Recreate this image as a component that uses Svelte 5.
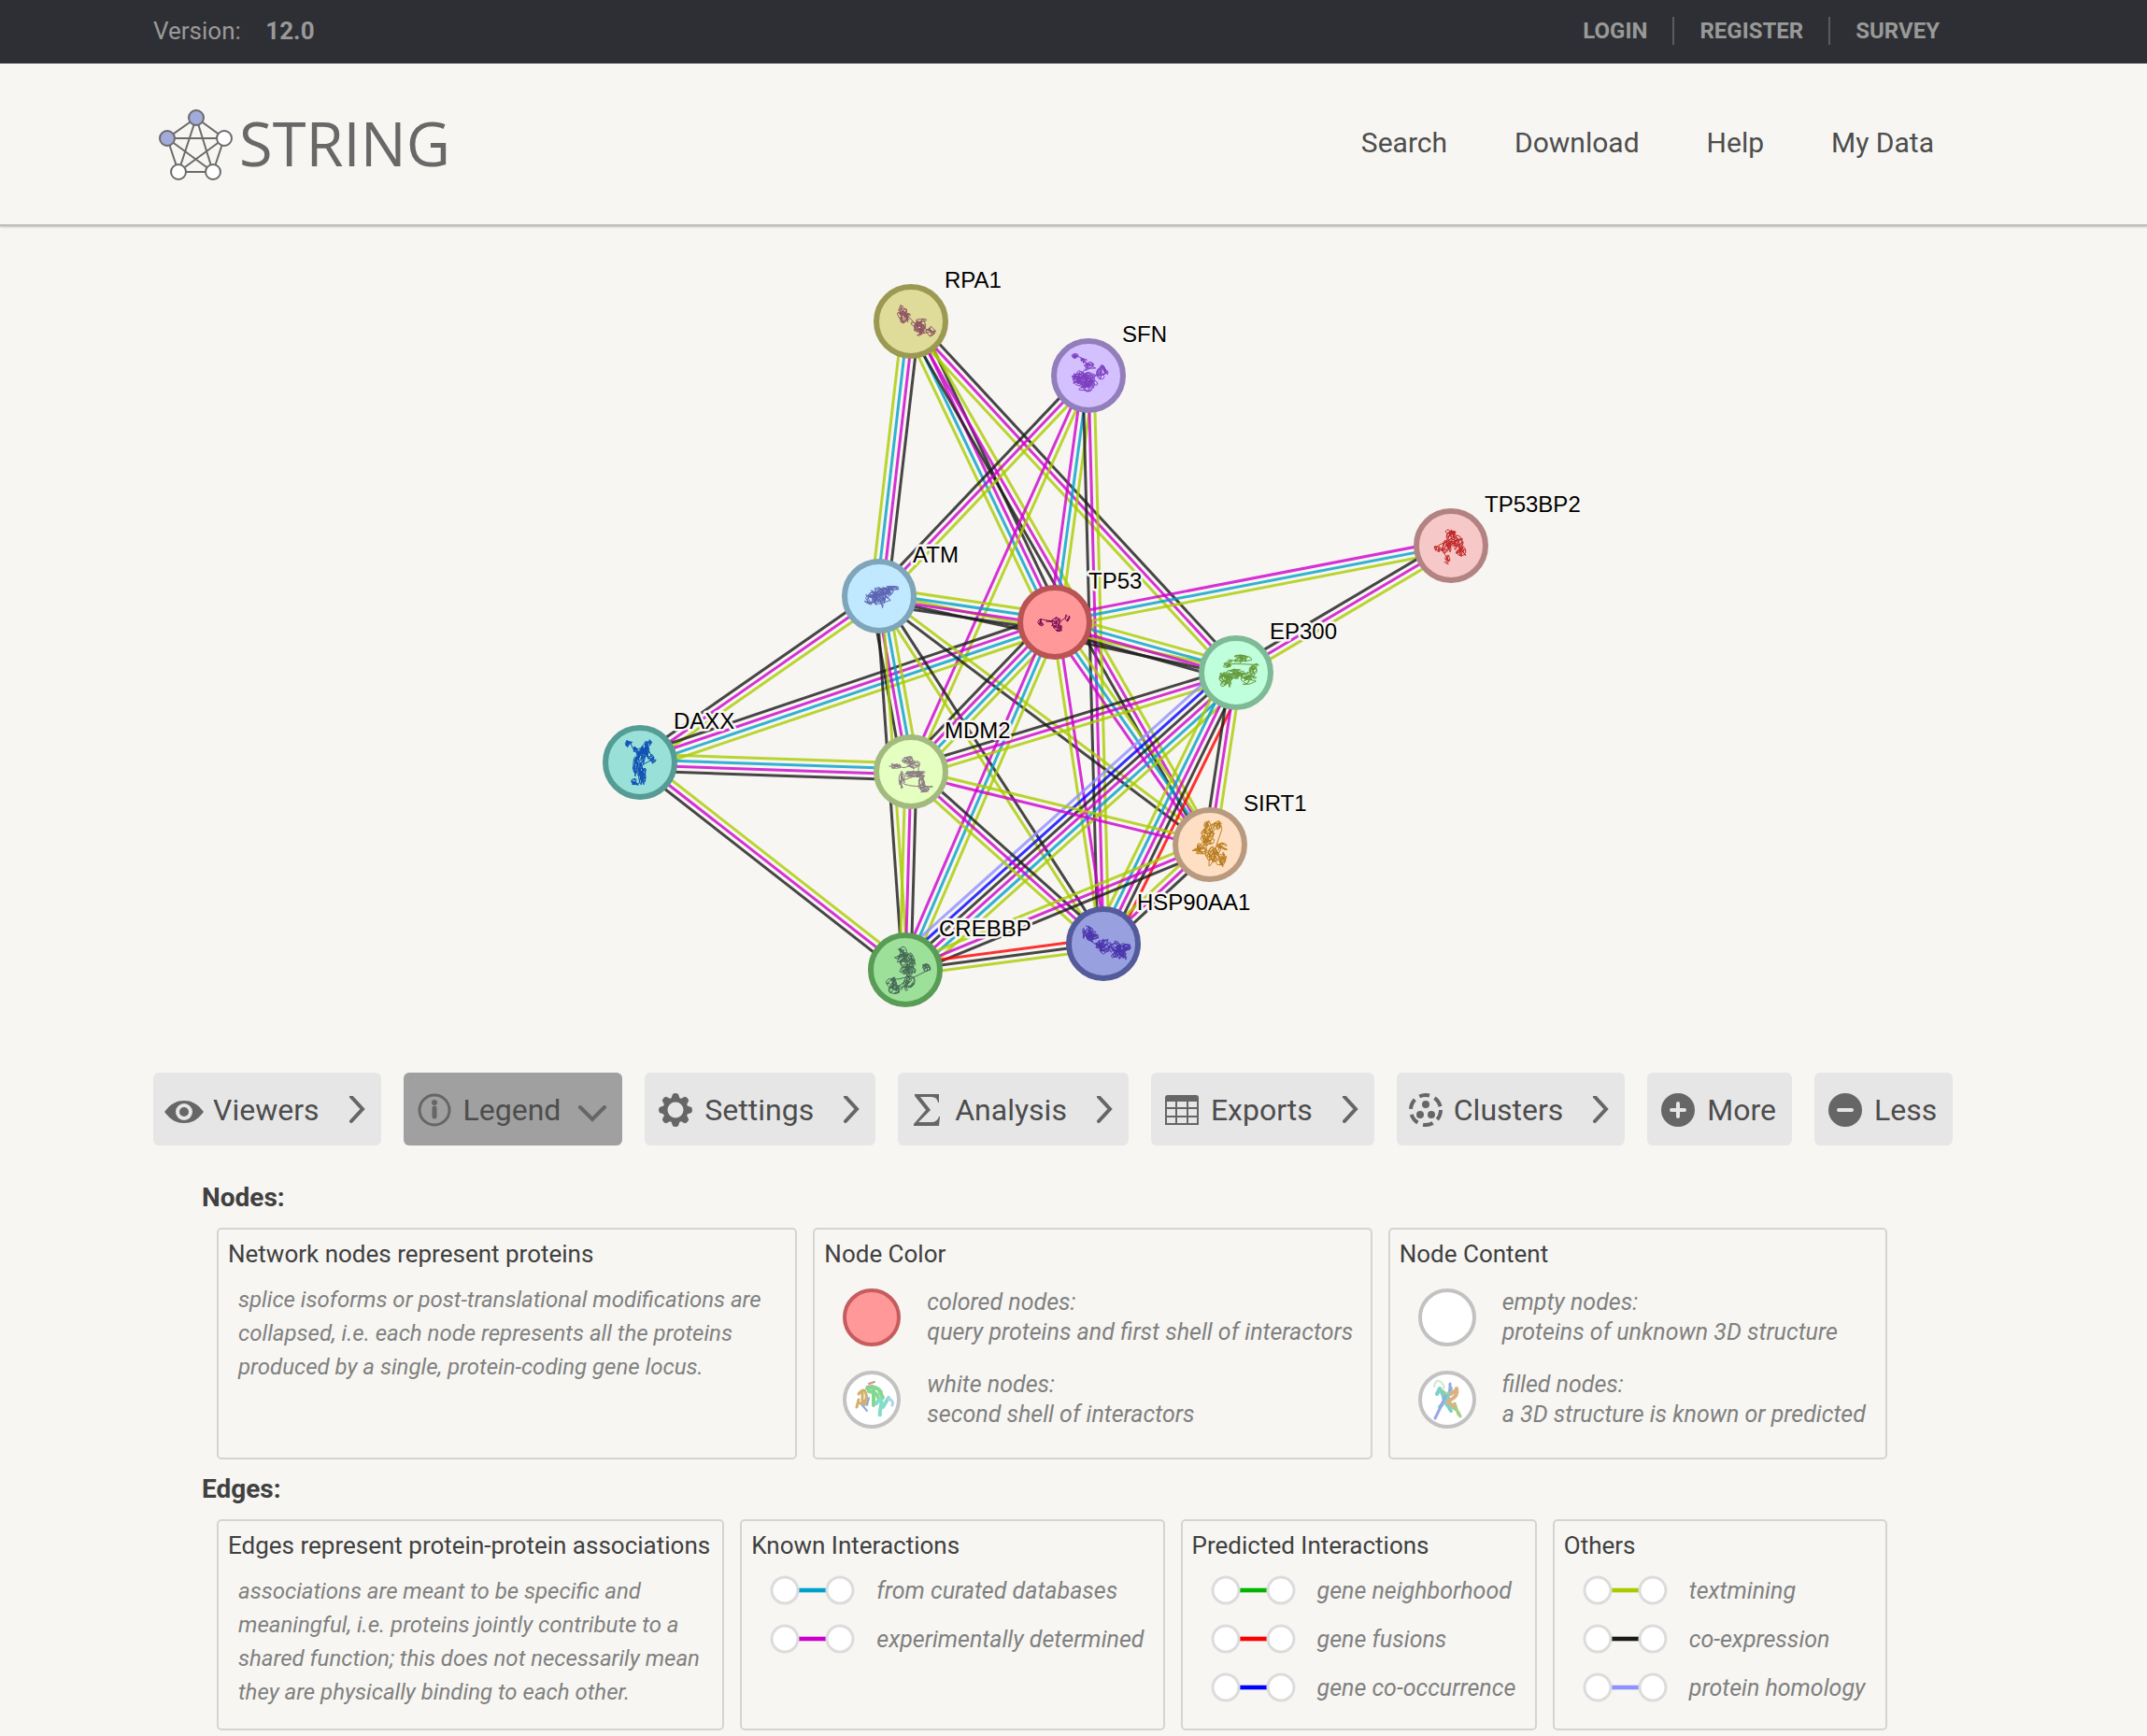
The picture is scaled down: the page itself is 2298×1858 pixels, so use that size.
<script lang="ts">
    type Blob = [number, number, number, number];
    type ProteinNode = { name: string; x: number; y: number; fill: string; ring: string; ink: string; blobs: Blob[] };

    // one letter for each kind of evidence
    const evidence: Record<string, string> = {
        t: '#a9cc00',
        e: '#cc00cc',
        d: '#00a0c8',
        c: '#1a1a1a',
        f: '#ff0000',
        o: '#0000ff',
        h: '#9090ff',
        n: '#00b400'
    };

    const nodes: ProteinNode[] = [
        { name: 'RPA1', x: 975, y: 344, fill: '#dfdc99', ring: '#9c9953', ink: '#8f5563', blobs: [[-9, -11, 6, 8], [-9, -4, 11, 9], [9, 4, 11, 10], [10, 9, 8, 8], [21, 10, 7, 7]] },
        { name: 'SFN', x: 1165, y: 402, fill: '#d4c0ff', ring: '#917eba', ink: '#7c3fc0', blobs: [[-14, -20, 6, 5], [-7, -15, 6, 5], [1, -9, 7, 7], [-4, 3, 17, 13], [0, 10, 12, 10], [14, -4, 8, 11]] },
        { name: 'ATM', x: 941, y: 638, fill: '#c0e8ff', ring: '#7ea5ba', ink: '#5d66b4', blobs: [[-7, 3, 13, 9], [0, 1, 14, 13], [7, -5, 11, 8], [14, -8, 9, 4]] },
        { name: 'TP53', x: 1129, y: 666, fill: '#ff9999', ring: '#ba5454', ink: '#7c1257', blobs: [[-16, 0, 5, 6], [-5, -1, 8, 1], [2, 1, 8, 8], [4, 7, 6, 6], [13, -4, 4, 6]] },
        { name: 'TP53BP2', x: 1553, y: 584, fill: '#f7c8c8', ring: '#b38383', ink: '#c02727', blobs: [[0, -12, 9, 8], [6, -4, 9, 10], [10, 7, 8, 8], [-5, 1, 7, 11], [-15, 3, 4, 6], [-3, 15, 5, 6]] },
        { name: 'EP300', x: 1323, y: 720, fill: '#c0ffdb', ring: '#7eba96', ink: '#659a3a', blobs: [[6, -14, 14, 6], [-9, -9, 7, 7], [18, -5, 7, 9], [-12, 7, 13, 10], [0, 1, 14, 7], [12, 6, 11, 9]] },
        { name: 'DAXX', x: 685, y: 816, fill: '#99e0d8', ring: '#549c94', ink: '#1050b4', blobs: [[-12, -20, 6, 5], [-4, -14, 6, 5], [1, -9, 6, 14], [6, -12, 6, 12], [10, -22, 5, 6], [13, -3, 6, 6], [-4, 4, 5, 16], [2, 14, 6, 16], [-6, 21, 7, 5]] },
        { name: 'MDM2', x: 975, y: 826, fill: '#e4ffc0', ring: '#a2ba7e', ink: '#8c7b84', blobs: [[-15, -6, 9, 4], [-2, -12, 9, 7], [3, -8, 8, 6], [3, 2, 16, 5], [-10, 8, 5, 12], [12, 8, 5, 9], [16, 17, 10, 7]] },
        { name: 'CREBBP', x: 969, y: 1038, fill: '#9de09a', ring: '#599c55', ink: '#476a56', blobs: [[-4, -20, 6, 7], [-4, -13, 10, 7], [3, -8, 10, 12], [3, 2, 10, 10], [3, 14, 9, 11], [-14, 13, 9, 8], [-11, 20, 10, 7], [21, -3, 8, 6]] },
        { name: 'SIRT1', x: 1295, y: 904, fill: '#ffdfc4', ring: '#ba9a7f', ink: '#b97d1c', blobs: [[-4, -22, 5, 7], [-2, -13, 10, 8], [-4, -4, 10, 10], [-10, 4, 11, 8], [8, -20, 8, 7], [3, 12, 10, 12], [13, 16, 8, 11], [14, 3, 10, 6]] },
        { name: 'HSP90AA1', x: 1181, y: 1010, fill: '#99a0e0', ring: '#545b9c', ink: '#4a35ac', blobs: [[-16, -11, 8, 10], [-12, -9, 10, 9], [-4, 1, 7, 10], [3, 3, 10, 9], [13, 6, 9, 11], [21, 10, 9, 12], [25, 4, 7, 7]] }
    ];

    // from, to, strands: the first strand lies on the left of the direction of travel
    const edges: [string, string, string][] = [
        ['ATM', 'RPA1', 'tdec'],
        ['RPA1', 'TP53', 'cedt'],
        ['RPA1', 'SIRT1', 'tec'],
        ['RPA1', 'EP300', 'cet'],
        ['ATM', 'SFN', 'cet'],
        ['MDM2', 'SFN', 'et'],
        ['TP53', 'SFN', 'edt'],
        ['HSP90AA1', 'SFN', 'cet'],
        ['ATM', 'EP300', 'tc'],
        ['ATM', 'TP53', 'tdec'],
        ['TP53', 'EP300', 'tdec'],
        ['DAXX', 'ATM', 'cet'],
        ['DAXX', 'TP53', 'cedt'],
        ['DAXX', 'MDM2', 'tdec'],
        ['DAXX', 'CREBBP', 'tec'],
        ['MDM2', 'ATM', 'cedt'],
        ['CREBBP', 'ATM', 'ct'],
        ['CREBBP', 'MDM2', 'tec'],
        ['ATM', 'HSP90AA1', 'ct'],
        ['ATM', 'SIRT1', 'tc'],
        ['MDM2', 'TP53', 'cedt'],
        ['CREBBP', 'TP53', 'edt'],
        ['HSP90AA1', 'TP53', 'te'],
        ['TP53', 'SIRT1', 'tde'],
        ['TP53', 'TP53BP2', 'edt'],
        ['EP300', 'TP53BP2', 'cet'],
        ['MDM2', 'EP300', 'cet'],
        ['CREBBP', 'EP300', 'hocedt'],
        ['HSP90AA1', 'EP300', 'tdecf'],
        ['SIRT1', 'EP300', 'cet'],
        ['MDM2', 'SIRT1', 'te'],
        ['MDM2', 'HSP90AA1', 'cet'],
        ['CREBBP', 'SIRT1', 'tec'],
        ['HSP90AA1', 'SIRT1', 'tec'],
        ['CREBBP', 'HSP90AA1', 'fct']
    ];

    const strands = edges.flatMap(([from, to, kinds]) => {
        const a = nodes.find((n) => n.name === from)!;
        const b = nodes.find((n) => n.name === to)!;
        const len = Math.hypot(b.x - a.x, b.y - a.y);
        const nx = -(b.y - a.y) / len;
        const ny = (b.x - a.x) / len;
        return kinds.split('').map((kind, i) => {
            const off = (i - (kinds.length - 1) / 2) * 6;
            return { x1: a.x + nx * off, y1: a.y + ny * off, x2: b.x + nx * off, y2: b.y + ny * off, color: evidence[kind] };
        });
    });

    // folded chain that wanders through each blob in turn
    function fold(blobs: Blob[], seed: number) {
        let s = seed * 7919 + 13;
        const rnd = () => {
            s = (s * 16807) % 2147483647;
            return s / 2147483647;
        };
        const points: [number, number][] = [];
        for (const [x, y, rx, ry] of blobs) {
            const count = Math.round((rx * ry) / 4) + 10;
            for (let i = 0; i < count; i++) {
                const a = rnd() * Math.PI * 2;
                const r = Math.sqrt(rnd());
                points.push([x + Math.cos(a) * rx * r, y + Math.sin(a) * ry * r]);
            }
        }
        let d = `M${points[0][0].toFixed(1)} ${points[0][1].toFixed(1)}`;
        for (let i = 1; i < points.length - 1; i++) {
            const [x, y] = points[i];
            const [x2, y2] = points[i + 1];
            d += `Q${x.toFixed(1)} ${y.toFixed(1)} ${((x + x2) / 2).toFixed(1)} ${((y + y2) / 2).toFixed(1)}`;
        }
        return d;
    }

    const account = ['Login', 'Register', 'Survey'];
    const menu = ['Search', 'Download', 'Help', 'My Data'];
    const tools = [
        { label: 'Viewers', arrow: true },
        { label: 'Legend', arrow: true, open: true },
        { label: 'Settings', arrow: true },
        { label: 'Analysis', arrow: true, narrow: true },
        { label: 'Exports', arrow: true },
        { label: 'Clusters', arrow: true, narrow: true },
        { label: 'More', arrow: false },
        { label: 'Less', arrow: false }
    ];

    const nodeBoxes = [
        { title: 'Node Color', items: [
            { kind: 'red', name: 'colored nodes:', text: 'query proteins and first shell of interactors' },
            { kind: 'globule', name: 'white nodes:', text: 'second shell of interactors' }
        ] },
        { title: 'Node Content', items: [
            { kind: 'empty', name: 'empty nodes:', text: 'proteins of unknown 3D structure' },
            { kind: 'cross', name: 'filled nodes:', text: 'a 3D structure is known or predicted' }
        ] }
    ];

    const edgeBoxes = [
        { title: 'Known Interactions', items: [['d', 'from curated databases'], ['e', 'experimentally determined']] },
        { title: 'Predicted Interactions', items: [['n', 'gene neighborhood'], ['f', 'gene fusions'], ['o', 'gene co-occurrence']] },
        { title: 'Others', items: [['t', 'textmining'], ['c', 'co-expression'], ['h', 'protein homology']] }
    ];
</script>

<div class="topbar">
    <p class="version">Version: <strong>12.0</strong></p>
    <nav class="account" aria-label="Account">
        {#each account as item}
            <a href="#{item}">{item}</a>
        {/each}
    </nav>
</div>

<header class="masthead">
    <a class="logo" href="#home">
        <svg width="82" height="84" viewBox="170 109 82 84" aria-hidden="true">
            <path d="M210 124L179 146L191 182H228L240 146ZM210 124L191 182M210 124L228 182M179 146H240M179 146L228 182M240 146L191 182" fill="none" stroke="#6b6b6b" stroke-width="2" />
            <g stroke="#6b6b6b" stroke-width="2">
                <circle cx="210" cy="124" r="8" fill="#a3abdb" />
                <circle cx="179" cy="146" r="8" fill="#a3abdb" />
                <circle cx="240" cy="146" r="8" fill="#fff" />
                <circle cx="191" cy="182" r="8" fill="#fff" />
                <circle cx="228" cy="182" r="8" fill="#fff" />
            </g>
        </svg>
        <span>STRING</span>
    </a>
    <nav class="menu" aria-label="Main">
        {#each menu as item}
            <a href="#{item}">{item}</a>
        {/each}
    </nav>
</header>

<main>
    <svg class="network" viewBox="589 242 1120 906" role="img" aria-label="Protein network">
        <g class="strands">
            {#each strands as s}
                <line x1={s.x1} y1={s.y1} x2={s.x2} y2={s.y2} stroke={s.color} />
            {/each}
        </g>
        {#each nodes as n, i}
            <g transform="translate({n.x} {n.y})">
                <circle r="37" fill={n.fill} stroke={n.ring} stroke-width="6" />
                <path d={fold(n.blobs, i + 1)} fill="none" stroke={n.ink} stroke-width="1" />
            </g>
        {/each}
        {#each nodes as n}
            <text x={n.x + 36} y={n.y - 36}>{n.name}</text>
        {/each}
    </svg>

    <div class="tools">
        {#each tools as tool}
            <button type="button" class:open={tool.open} aria-expanded={tool.open ? 'true' : 'false'}>
                <svg class="icon" class:narrow={tool.narrow} viewBox="-21 -20 42 40" aria-hidden="true">
                    {#if tool.label === 'Viewers'}
                        <path d="M-21 2C-14 -7 -8 -10 0 -10S14 -7 21 2C14 11 8 14 0 14S-14 11 -21 2Z" />
                        <circle cy="2" r="9" class="hole" />
                        <circle cy="2" r="5" />
                    {:else if tool.label === 'Legend'}
                        <circle r="16" class="line" />
                        <circle cy="-8" r="3" />
                        <path d="M0 -2V7" class="line thick" />
                    {:else if tool.label === 'Settings'}
                        {#each [0, 45, 90, 135, 180, 225, 270, 315] as turn}
                            <path d="M-5 -11L-3 -17Q0 -19 3 -17L5 -11Z" transform="rotate({turn})" />
                        {/each}
                        <circle r="11" class="line gear" />
                    {:else if tool.label === 'Analysis'}
                        <path d="M-13 -17H13V-8H12Q11 -14 5 -14H-7L4 0L-9 13H5Q11 13 13 7H14L13 17H-14V15L-1 0L-13 -15Z" />
                    {:else if tool.label === 'Exports'}
                        <path d="M-18 -13Q-18 -16 -15 -16H15Q18 -16 18 -13V-9H-18Z" />
                        <path d="M-17 -10V15H17V-10M-17 -2H17M-17 7H17M-6 -10V15M6 -10V15" class="line thin" />
                    {:else if tool.label === 'Clusters'}
                        <circle r="16" class="line dash" />
                        <circle cy="-6" r="4" />
                        <circle cx="-6" cy="5" r="4" />
                        <circle cx="6" cy="5" r="4" />
                    {:else}
                        <circle r="18" />
                        <path d={tool.label === 'More' ? 'M-7 0H7M0 -7V7' : 'M-7 0H7'} class="sign" />
                    {/if}
                </svg>
                <span>{tool.label}</span>
                {#if tool.open}
                    <svg class="chevron down" viewBox="0 0 32 26" aria-hidden="true"><path d="M4 10L17 23L30 10" /></svg>
                {:else if tool.arrow}
                    <svg class="chevron" viewBox="0 0 18 30" aria-hidden="true"><path d="M3 1L15 14L3 27" /></svg>
                {/if}
            </button>
        {/each}
    </div>

    <section class="legend">
        <h2>Nodes:</h2>
        <div class="row nodes">
            <div class="box">
                <h3>Network nodes represent proteins</h3>
                <p>splice isoforms or post-translational modifications are<br />collapsed, i.e. each node represents all the proteins<br />produced by a single, protein-coding gene locus.</p>
            </div>
            {#each nodeBoxes as box}
                <div class="box">
                    <h3>{box.title}</h3>
                    <ul class="samples">
                        {#each box.items as item}
                            <li>
                                <svg width="62" height="62" viewBox="-31 -31 62 62" aria-hidden="true">
                                    <circle r="29" fill={item.kind === 'red' ? '#ff9999' : '#fff'} stroke={item.kind === 'red' ? '#c75c5f' : '#c2c2c2'} stroke-width="4" />
                                    {#if item.kind === 'globule'}
                                        <g fill="none" stroke-width="2" stroke-linecap="round" opacity="0.7">
                                            <path d="M-3 -17L3 -19M-5 -14L1 -15" stroke="#c06060" />
                                            <path d="M-14 -6Q-8 -14 -6 -6T-12 4Q-6 8 -4 0M-16 8L-14 0M-10 -8V4" stroke="#c09030" stroke-width="3" />
                                            <path d="M-5 -12Q4 -16 10 -8M-3 -9Q6 -8 7 -2M2 -12V6M8 -10L12 -2" stroke="#50c860" stroke-width="4" />
                                            <path d="M5 4Q12 -6 10 6T9 16M12 8L18 -2" stroke="#50d0b0" stroke-width="4" />
                                            <path d="M18 -1Q24 1 22 6" stroke="#90c0e8" stroke-width="3" />
                                            <path d="M-10 6L-5 12M-3 -2L-5 6" stroke="#6088c8" />
                                        </g>
                                    {:else if item.kind === 'cross'}
                                        <g fill="none" stroke-width="2" stroke-linecap="round" opacity="0.7">
                                            <path d="M-14 -14Q-12 -24 -6 -18T-8 -10" stroke="#b8e0c0" />
                                            <path d="M-8 -10Q0 -8 2 0T8 10Q12 12 14 18M8 4L12 16" stroke="#80b850" stroke-width="3" />
                                            <path d="M-11 -6L-8 -12M-6 -8L0 6M-8 8Q0 0 4 -12M-4 -2L4 12" stroke="#40c0b0" stroke-width="4" />
                                            <path d="M10 -12Q12 -4 4 0T8 6M4 -6L9 -10" stroke="#d09050" stroke-width="4" />
                                            <path d="M-13 20L-7 8L-2 -4M3 -17V-10" stroke="#7080d8" stroke-width="3" />
                                        </g>
                                    {/if}
                                </svg>
                                <span>{item.name}<br />{item.text}</span>
                            </li>
                        {/each}
                    </ul>
                </div>
            {/each}
        </div>

        <h2>Edges:</h2>
        <div class="row edges">
            <div class="box">
                <h3>Edges represent protein-protein associations</h3>
                <p>associations are meant to be specific and<br />meaningful, i.e. proteins jointly contribute to a<br />shared function; this does not necessarily mean<br />they are physically binding to each other.</p>
            </div>
            {#each edgeBoxes as box}
                <div class="box">
                    <h3>{box.title}</h3>
                    <ul class="links">
                        {#each box.items as [kind, text]}
                            <li>
                                <svg width="92" height="34" viewBox="0 0 92 34" aria-hidden="true">
                                    <path d="M30 17H62" stroke={evidence[kind]} stroke-opacity="0.3" stroke-width="6" />
                                    <path d="M30 17H62" stroke={evidence[kind]} stroke-width="4" />
                                    <g fill="#fff" stroke="#dcdcdc" stroke-width="3">
                                        <circle cx="16" cy="17" r="14" />
                                        <circle cx="75" cy="17" r="14" />
                                    </g>
                                </svg>
                                <span>{text}</span>
                            </li>
                        {/each}
                    </ul>
                </div>
            {/each}
        </div>
    </section>
</main>

<style>
    :global(body) {
        margin: 0;
        background: #f7f6f2;
        color: #404040;
        font-family: Roboto, "Liberation Sans", sans-serif;
    }

    a {
        color: inherit;
        text-decoration: none;
    }

    .topbar,
    .masthead {
        display: flex;
        align-items: center;
        justify-content: space-between;
        box-sizing: border-box;
        padding: 0 220px 3px 164px;
    }

    .topbar {
        height: 68px;
        background: #2e2f34;
        color: #999;
    }

    .version {
        margin: 0;
        font-size: 26px;
    }

    .version strong {
        margin-left: 20px;
    }

    .account {
        display: flex;
        padding-right: 2px;
        font-size: 24px;
        font-weight: bold;
        line-height: 30px;
        text-transform: uppercase;
    }

    .account a + a {
        margin-left: 27px;
        padding-left: 27px;
        border-left: 2px solid #5a5b5f;
    }

    .masthead {
        height: 174px;
        border-bottom: 2px solid #c0bfbb;
        box-shadow: 0 1px 2px #c0bfbb;
    }

    .logo {
        display: flex;
        align-items: center;
        gap: 4px;
        padding-left: 6px;
        color: #686868;
        font-family: "Open Sans", "Noto Sans", sans-serif;
        font-size: 65px;
        line-height: 80px;
    }

    .menu {
        display: flex;
        gap: 72px;
        padding-right: 8px;
        color: #4d4d4d;
        font-size: 30px;
    }

    .network {
        display: block;
        width: 1120px;
        max-width: 100%;
        margin: 0 auto;
    }

    .strands {
        stroke-width: 3px;
        stroke-opacity: 0.8;
    }

    .network text {
        fill: #000;
        stroke: #f7f6f2;
        stroke-width: 5px;
        stroke-linejoin: round;
        paint-order: stroke;
        font-family: "Liberation Sans", Arial, sans-serif;
        font-size: 24px;
    }

    .tools {
        display: flex;
        flex-wrap: wrap;
        gap: 24px;
        padding: 0 164px;
    }

    .tools button {
        display: flex;
        align-items: center;
        height: 78px;
        padding: 2px 17px 0 12px;
        border: 0;
        border-radius: 6px;
        background: #e6e6e6;
        color: #4d4d4d;
        font-family: inherit;
        font-size: 32px;
    }

    .tools button.open {
        background: #a0a0a0;
    }

    .icon {
        width: 42px;
        height: 40px;
        margin-right: 10px;
        fill: #666;
    }

    .icon.narrow {
        margin: 0 9px 0 -2px;
    }

    .icon .hole {
        fill: #e6e6e6;
    }

    .icon .line {
        fill: none;
        stroke: #666;
        stroke-width: 3px;
    }

    .icon .thick {
        stroke-width: 5px;
        stroke-linecap: round;
    }

    .icon .thin {
        stroke-width: 2px;
    }

    .icon .gear {
        stroke-width: 5px;
    }

    .icon .dash {
        stroke-width: 4px;
        stroke-dasharray: 11 6;
    }

    .icon .sign {
        stroke: #e6e6e6;
        stroke-width: 4px;
        stroke-linecap: round;
    }

    .chevron {
        width: 18px;
        height: 30px;
        margin-left: 31px;
        fill: none;
        stroke: #666;
        stroke-width: 4px;
        stroke-linecap: round;
    }

    .chevron.down {
        width: 32px;
        height: 26px;
        margin-left: 17px;
    }

    .legend {
        padding: 39px 278px 6px 216px;
    }

    h2 {
        margin: 0;
        font-size: 28px;
        font-weight: bold;
        line-height: 34px;
    }

    h3 {
        margin: 0;
        font-size: 26px;
        font-weight: normal;
        line-height: 30px;
    }

    .row {
        display: grid;
        gap: 17px;
        margin: 15px 0 15px 16px;
    }

    .row.nodes {
        grid-template-columns: 621fr 598fr 534fr;
    }

    .row.edges {
        grid-template-columns: 543fr 454fr 381fr 358fr;
        margin-bottom: 0;
    }

    .box {
        padding: 11px 10px;
        border: 2px solid #d4d4d4;
        border-radius: 5px;
    }

    .box p,
    .box li {
        color: #808080;
        font-size: 24px;
        font-style: italic;
    }

    .box p {
        margin: 16px 0 10px 11px;
        line-height: 36px;
    }

    .box ul {
        margin: 0;
        padding: 0;
        list-style: none;
    }

    .box li {
        display: flex;
        align-items: center;
        padding-left: 20px;
        font-size: 25px;
    }

    .box .samples {
        display: grid;
        gap: 24px;
        padding: 21px 0 19px;
    }

    .samples li {
        gap: 28px;
        line-height: 32px;
    }

    .box .links {
        padding-top: 7px;
    }

    .links li {
        height: 52px;
        gap: 22px;
    }
</style>
